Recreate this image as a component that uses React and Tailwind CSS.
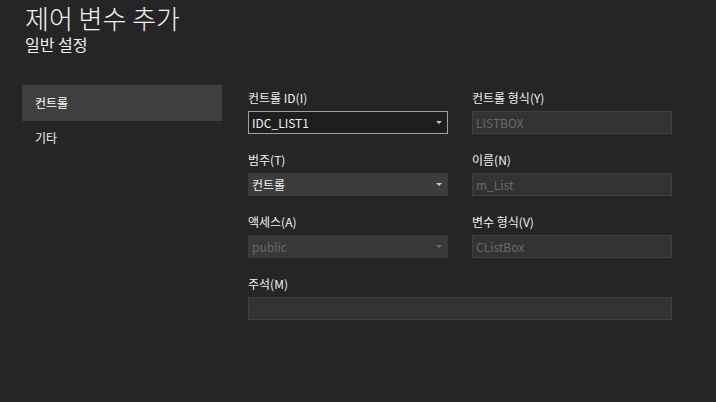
import React from 'react';

const font = { fontFamily: '"Noto Sans CJK KR", "Noto Sans", sans-serif' };

const Arrow = ({ color }) => (
  <svg width="6" height="3" viewBox="0 0 6 3" className="shrink-0">
    <path d="M0 0 H6 L3 3 Z" fill={color} />
  </svg>
);

const Field = ({ label, children, wide }) => (
  <div className={wide ? 'col-span-2 flex flex-col' : 'flex flex-col'}>
    <div className="h-4 text-[12px] leading-4 text-[#f1f1f1]">{label}</div>
    <div className="mt-[5px]">{children}</div>
  </div>
);

const Combo = ({ value, focused, disabled }) => {
  let cls = 'bg-[#3c3c3c] border-[#3c3c3c] text-[#f1f1f1]';
  if (focused) cls = 'bg-[#1e1e1e] border-[#a0a0a0] text-[#f1f1f1]';
  if (disabled) cls = 'bg-[#393939] border-[#393939] text-[#6a6a6a]';
  return (
    <div className={`flex h-[23px] w-[200px] items-center justify-between border pl-[3px] pr-[5px] text-[12px] ${cls}`}>
      <span>{value}</span>
      <Arrow color={disabled ? '#6e6e6e' : '#c8c8c8'} />
    </div>
  );
};

const TextBox = ({ value, wide }) => (
  <div
    className={`flex h-[23px] items-center border border-[#414141] bg-[#333333] pl-[3px] text-[12px] text-[#6a6a6a] ${
      wide ? 'w-[424px]' : 'w-[200px]'
    }`}
  >
    {value}
  </div>
);

export default function App() {
  return (
    <div className="h-[402px] w-[716px] overflow-hidden bg-[#252526] text-white" style={font}>
      <div className="pl-[25px] pt-[2px]">
        <h1 className="h-8 text-[26px] font-light leading-8 text-[#f1f1f1]">제어 변수 추가</h1>
        <h2 className="h-5 text-[16px] leading-5 text-[#f1f1f1]">일반 설정</h2>
      </div>

      <div className="mt-[31px] flex">
        <nav className="ml-[22px] flex w-[200px] flex-col text-[12px]">
          <div className="flex h-9 items-center bg-[#3f3f3f] pl-[13px] text-white">컨트롤</div>
          <div className="flex h-[34px] items-center pl-[13px] text-[#f1f1f1]">기타</div>
        </nav>

        <div className="ml-[26px] grid grid-cols-[200px_200px] gap-x-6 gap-y-[18px] pt-[5px]">
          <Field label="컨트롤 ID(I)">
            <Combo value="IDC_LIST1" focused />
          </Field>
          <Field label="컨트롤 형식(Y)">
            <TextBox value="LISTBOX" />
          </Field>
          <Field label="범주(T)">
            <Combo value="컨트롤" />
          </Field>
          <Field label="이름(N)">
            <TextBox value="m_List" />
          </Field>
          <Field label="액세스(A)">
            <Combo value="public" disabled />
          </Field>
          <Field label="변수 형식(V)">
            <TextBox value="CListBox" />
          </Field>
          <Field label="주석(M)" wide>
            <TextBox value="" wide />
          </Field>
        </div>
      </div>
    </div>
  );
}
